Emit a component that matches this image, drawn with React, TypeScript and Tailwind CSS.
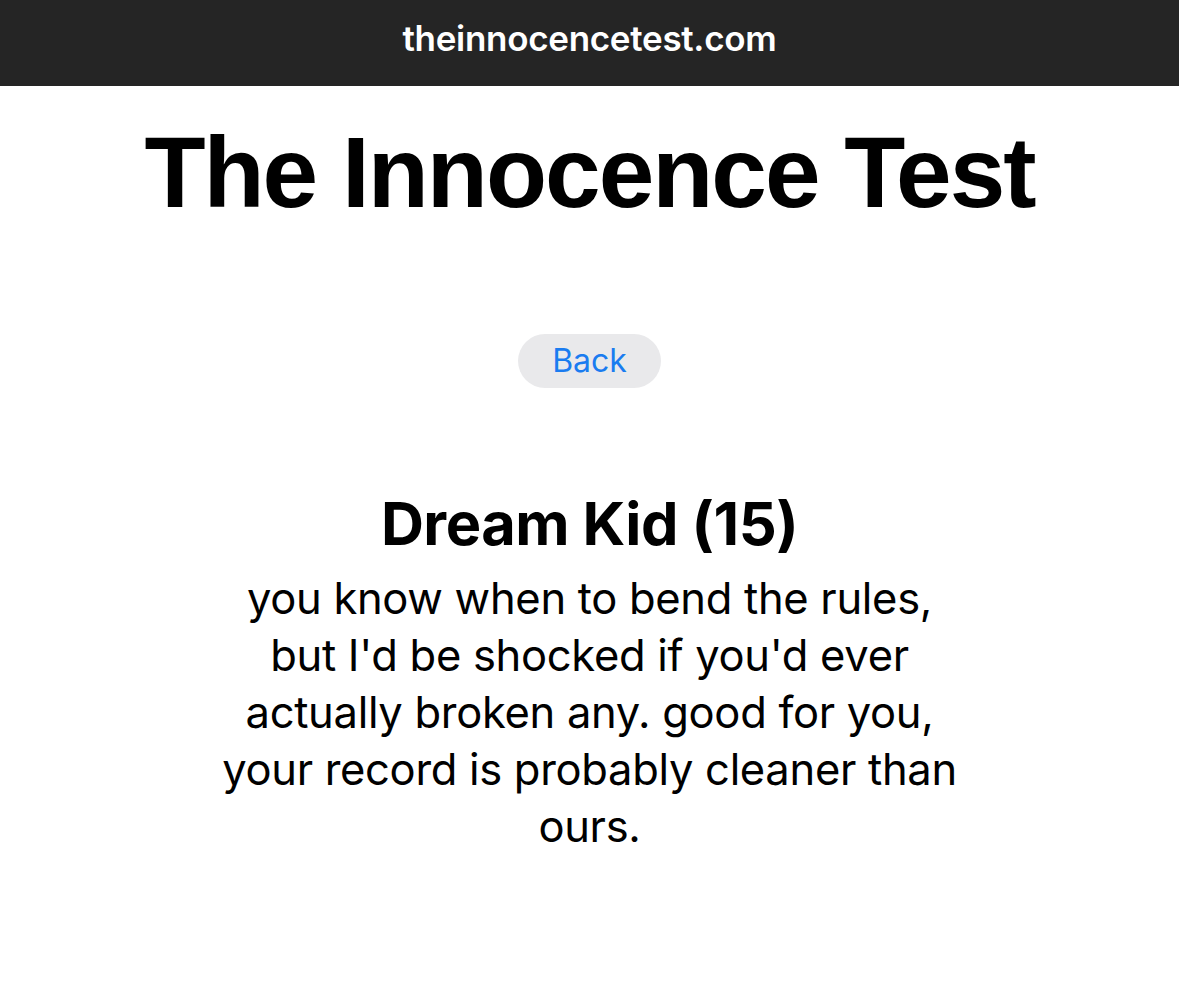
export default function App() {
  return (
    <div className="min-h-screen bg-white font-['Inter','Noto_Sans',sans-serif] text-black">
      <header className="flex h-[86px] items-center justify-center bg-[#252525] pb-[10px]">
        <span className="text-[35px] font-semibold tracking-[-0.3px] text-white">theinnocencetest.com</span>
      </header>

      <main className="flex flex-col items-center">
        <h1 className="mt-[16px] font-['Liberation_Sans',Arial,sans-serif] text-[100px] font-bold leading-[140px] tracking-[-2px]">
          The Innocence Test
        </h1>

        <button className="mt-[92px] h-[54px] w-[143px] rounded-full bg-[#e9e9eb] text-[32px] text-[#1a7cf0]">
          Back
        </button>

        <h2 className="mt-[100px] text-[59.5px] font-bold leading-[70px] tracking-[-0.5px]">Dream Kid (15)</h2>
        <p className="mt-[12px] w-[750px] text-center text-[43.5px] leading-[57px] tracking-[-0.3px]">
          you know when to bend the rules, but I'd be shocked if you'd ever actually broken any. good for you, your record is probably cleaner than ours.
        </p>
      </main>
    </div>
  );
}
